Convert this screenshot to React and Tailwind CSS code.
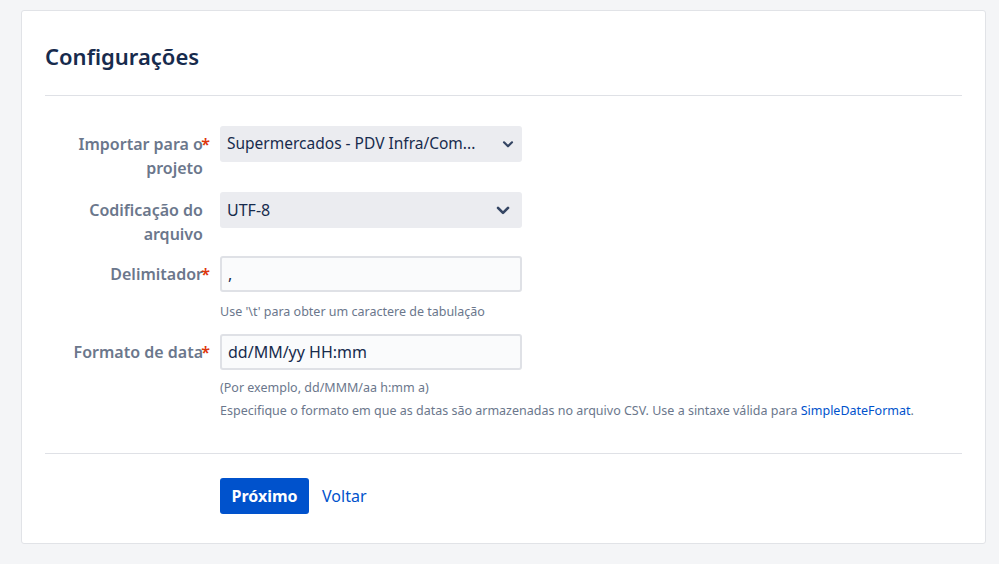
import React from 'react'

const font = { fontFamily: '"Noto Sans", "Open Sans", sans-serif' }

const Chevron = ({ size }) => (
  <svg width={size} height={size} viewBox="0 0 24 24" fill="none">
    <path d="M6 9.5l6 6 6-6" stroke="#344563" strokeWidth="3.2" strokeLinecap="round" strokeLinejoin="round" />
  </svg>
)

// asterisk sits in the right padding, next to the first line
const Label = ({ children, required }) => (
  <div className="relative w-[175px] shrink-0 pt-[6px] pr-[17px] text-right text-[16px] leading-6 font-semibold text-[#6b778c]">
    {children}
    {required && <span className="absolute top-[6px] right-[10px] text-[#de350b]">*</span>}
  </div>
)

export default function App() {
  return (
    <div className="min-h-screen bg-[#f4f5f7] pt-[10px] pb-[20px]" style={font}>
      <div className="ml-[21px] w-[965px] rounded-[3px] border border-[#e1e3e7] bg-white px-[23px] pt-[29px] pb-[29px]">
        <h1 className="text-[22px] leading-8 font-semibold text-[#172b4d]">Configurações</h1>
        <div className="mt-[23px] h-px bg-[#dfe1e6]" />

        {/* fields */}
        <div className="mt-[30px] flex">
          <Label required>Importar para o projeto</Label>
          <div className="flex h-[36px] w-[302px] items-center justify-between rounded-[3px] bg-[#ebecf0] pl-[7px] pr-[6px] text-[15.5px] text-[#172b4d]">
            <span>Supermercados - PDV Infra/Com...</span>
            <Chevron size={16} />
          </div>
        </div>

        <div className="mt-[12px] flex">
          <Label>Codificação do arquivo</Label>
          <div className="flex h-[36px] w-[302px] items-center justify-between rounded-[3px] bg-[#ebecf0] pl-[7px] pr-[9px] text-[16px] text-[#172b4d]">
            <span>UTF-8</span>
            <Chevron size={20} />
          </div>
        </div>

        <div className="mt-[10px] flex">
          <Label required>Delimitador</Label>
          <div className="w-[302px]">
            <div className="flex h-[36px] items-center rounded-[3px] border-2 border-[#dfe1e6] bg-[#fafbfc] px-[6px] text-[16px] text-[#172b4d]">
              ,
            </div>
            <p className="mt-[8px] whitespace-nowrap text-[12.5px] leading-[23px] text-[#6b778c]">
              Use '\t' para obter um caractere de tabulação
            </p>
          </div>
        </div>

        <div className="mt-[11px] flex">
          <Label required>Formato de data</Label>
          <div className="w-[302px]">
            <div className="flex h-[36px] items-center rounded-[3px] border-2 border-[#dfe1e6] bg-[#fafbfc] px-[6px] text-[16px] text-[#172b4d]">
              dd/MM/yy HH:mm
            </div>
            <p className="mt-[6px] whitespace-nowrap text-[12.5px] leading-[23px] text-[#6b778c]">
              (Por exemplo, dd/MMM/aa h:mm a)
            </p>
            <p className="whitespace-nowrap text-[12.5px] leading-[23px] text-[#6b778c]">
              Especifique o formato em que as datas são armazenadas no arquivo CSV. Use a sintaxe válida para{' '}
              <a href="#" className="text-[#0052cc]">SimpleDateFormat</a>.
            </p>
          </div>
        </div>

        <div className="mt-[31px] h-px bg-[#dfe1e6]" />

        <div className="mt-[24px] flex items-center pl-[175px]">
          <button className="h-[36px] rounded-[3px] bg-[#0052cc] px-[11.5px] text-[16px] font-bold text-white">
            Próximo
          </button>
          <a href="#" className="ml-[13px] text-[16px] text-[#0052cc]">Voltar</a>
        </div>
      </div>
    </div>
  )
}
